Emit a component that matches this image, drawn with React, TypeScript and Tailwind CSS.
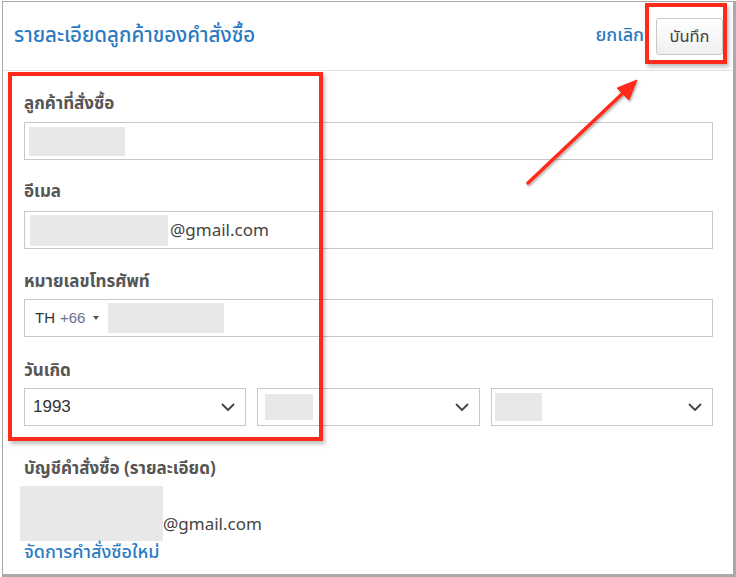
import React from "react";

const thai = { fontFamily: '"Noto Sans", "Noto Sans Thai", "Open Sans", sans-serif' };
const latin = { fontFamily: '"Liberation Sans", Arial, sans-serif' };

function Chevron() {
  return (
    <svg width="14" height="9" viewBox="0 0 14 9" fill="none" className="shrink-0">
      <path d="M1.5 1.5L7 7L12.5 1.5" stroke="#444" strokeWidth="1.8" strokeLinecap="round" strokeLinejoin="round" />
    </svg>
  );
}

function Label({ children, className = "" }: { children: React.ReactNode; className?: string }) {
  return (
    <div className={`h-6 text-[17px] font-bold leading-6 text-[#555] ${className}`} style={thai}>
      {children}
    </div>
  );
}

function Redact({ className }: { className: string }) {
  return <div className={`bg-[#e8e8e8] ${className}`} />;
}

export default function App() {
  return (
    <div className="relative h-[577px] w-[736px] overflow-hidden bg-white pl-[2px] pt-[1px]">
      <div className="flex h-full flex-col border-b-[3px] border-l border-r-[3px] border-t border-[#a9a9a9]">
        {/* header */}
        <div className="flex h-[69px] items-center justify-between border-b border-[#e3e3e3] pl-[11px] pr-[10px]">
          <h1 className="-mt-[3px] text-[20.5px] font-medium text-[#2b7bc2]" style={thai}>
            รายละเอียดลูกค้าของคำสั่งซื้อ
          </h1>
          <div className="flex items-center gap-[12px]">
            <span className="-mt-[3px] text-[18px] font-medium text-[#2b7bc2]" style={thai}>
              ยกเลิก
            </span>
            <button
              className="mt-[1px] h-[37px] w-[67px] rounded-[3px] border border-[#c8c8c8] bg-gradient-to-b from-white to-[#efefef] text-[16.5px] text-[#444]"
              style={thai}
            >
              บันทึก
            </button>
          </div>
        </div>

        {/* form */}
        <div className="flex flex-col pl-[21px] pr-[20px] pt-[20px]">
          <Label>ลูกค้าที่สั่งซื้อ</Label>
          <div className="mt-[7px] flex h-[38px] items-center border border-[#c8c8c8] px-[4px]">
            <Redact className="h-[29px] w-[96px]" />
          </div>

          <Label className="mt-[19px]">อีเมล</Label>
          <div className="mt-[8px] flex h-[38px] items-center border border-[#c8c8c8] px-[5px]">
            <Redact className="h-[31px] w-[138px]" />
            <span className="ml-[2px] text-[17px] text-[#444]" style={thai}>
              @gmail.com
            </span>
          </div>

          <Label className="mt-[20px]">หมายเลขโทรศัพท์</Label>
          <div className="mt-[6px] flex h-[38px] items-center border border-[#c8c8c8] pl-[10px]">
            <span className="text-[15px] text-[#333]" style={latin}>
              TH
            </span>
            <span className="ml-[5px] text-[15px] text-[#6b6f8c]" style={latin}>
              +66
            </span>
            <svg width="6" height="4" viewBox="0 0 6 4" className="ml-[8px]">
              <path d="M0 0H6L3 4Z" fill="#555" />
            </svg>
            <Redact className="ml-[9px] h-[30px] w-[116px]" />
          </div>

          <Label className="mt-[21px]">วันเกิด</Label>
          <div className="mt-[6px] grid grid-cols-3 gap-[11px]">
            <div className="flex h-[38px] items-center justify-between border border-[#c8c8c8] pl-[8px] pr-[10px]">
              <span className="text-[17px] text-[#333]" style={latin}>
                1993
              </span>
              <Chevron />
            </div>
            <div className="flex h-[38px] items-center justify-between border border-[#c8c8c8] pl-[7px] pr-[10px]">
              <Redact className="h-[26px] w-[48px]" />
              <Chevron />
            </div>
            <div className="flex h-[38px] items-center justify-between border border-[#c8c8c8] pl-[3px] pr-[10px]">
              <Redact className="h-[28px] w-[47px]" />
              <Chevron />
            </div>
          </div>

          <Label className="mt-[30px]">บัญชีคำสั่งซื้อ (รายละเอียด)</Label>
          <div className="-ml-[4px] mt-[6px] flex items-end">
            <Redact className="h-[55px] w-[143px]" />
            <span className="mb-[7px] text-[17px] leading-5 text-[#444]" style={thai}>
              @gmail.com
            </span>
          </div>
          <div className="-mt-[2px] text-[18px] font-medium leading-6 text-[#2b7bc2]" style={thai}>
            จัดการคำสั่งซือใหม่
          </div>
        </div>
      </div>

      {/* annotations */}
      <div className="pointer-events-none absolute left-[8px] top-[72px] h-[369px] w-[315px] border-[4px] border-[#ff2a1a] shadow-[2px_3px_4px_rgba(0,0,0,0.25)]" />
      <div className="pointer-events-none absolute left-[645px] top-[3px] h-[61px] w-[82px] border-[4px] border-[#ff2a1a] shadow-[2px_3px_4px_rgba(0,0,0,0.25)]" />
      <svg className="pointer-events-none absolute left-0 top-0" width="736" height="577">
        <defs>
          <filter id="sh" x="-20%" y="-20%" width="140%" height="140%">
            <feDropShadow dx="1" dy="2" stdDeviation="1.2" floodColor="#000" floodOpacity="0.3" />
          </filter>
        </defs>
        <g filter="url(#sh)">
          <line x1="528" y1="183" x2="622" y2="94" stroke="#ff2a1a" strokeWidth="3.5" strokeLinecap="round" />
          <path d="M637 80L629 100L617 88Z" fill="#ff2a1a" stroke="#ff2a1a" strokeWidth="1" strokeLinejoin="round" />
        </g>
      </svg>
    </div>
  );
}
